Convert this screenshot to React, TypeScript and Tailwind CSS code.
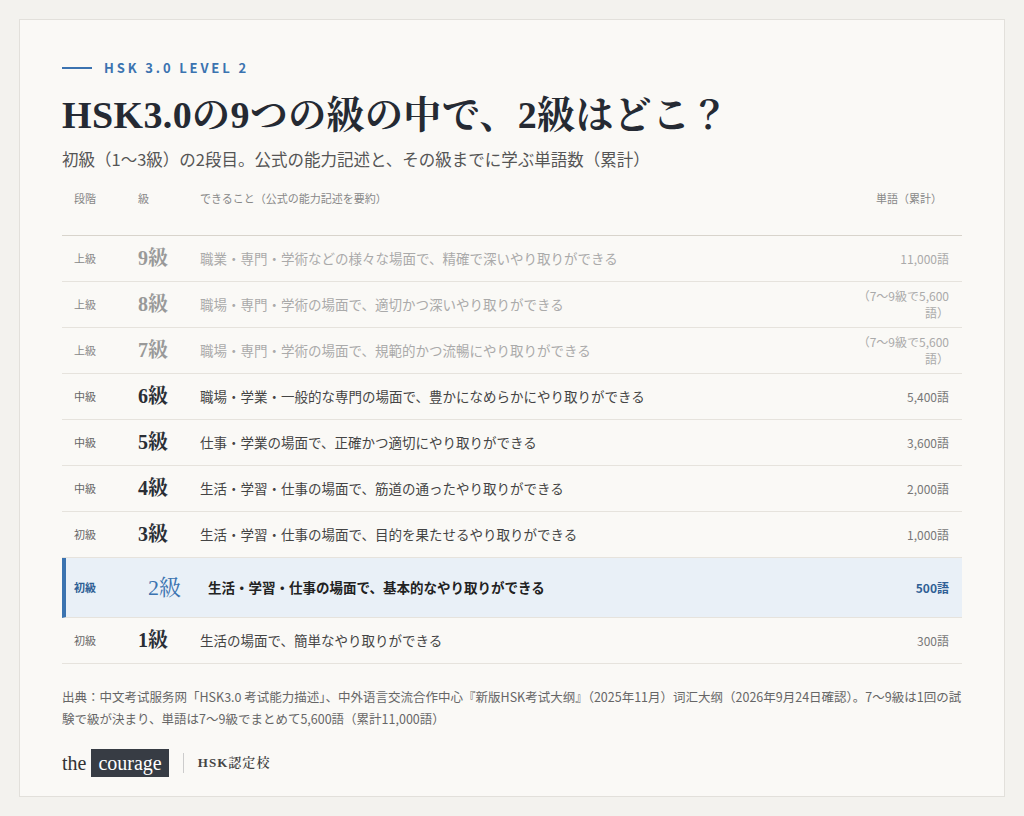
import React from "react";

const rows = [
  { s: "上級", g: "9級", d: "職業・専門・学術などの様々な場面で、精確で深いやり取りができる", w: "11,000語", dim: true },
  { s: "上級", g: "8級", d: "職場・専門・学術の場面で、適切かつ深いやり取りができる", w: "（7〜9級で5,600語）", dim: true },
  { s: "上級", g: "7級", d: "職場・専門・学術の場面で、規範的かつ流暢にやり取りができる", w: "（7〜9級で5,600語）", dim: true },
  { s: "中級", g: "6級", d: "職場・学業・一般的な専門の場面で、豊かになめらかにやり取りができる", w: "5,400語" },
  { s: "中級", g: "5級", d: "仕事・学業の場面で、正確かつ適切にやり取りができる", w: "3,600語" },
  { s: "中級", g: "4級", d: "生活・学習・仕事の場面で、筋道の通ったやり取りができる", w: "2,000語" },
  { s: "初級", g: "3級", d: "生活・学習・仕事の場面で、目的を果たせるやり取りができる", w: "1,000語" },
  { s: "初級", g: "2級", d: "生活・学習・仕事の場面で、基本的なやり取りができる", w: "500語", hl: true },
  { s: "初級", g: "1級", d: "生活の場面で、簡単なやり取りができる", w: "300語" },
];

const sans = { fontFamily: '"Noto Sans CJK JP", "Noto Sans", sans-serif' };
const serif = { fontFamily: '"Liberation Serif", "Noto Serif CJK JP", "Noto Sans CJK JP", serif' };

export default function App() {
  return (
    <div className="w-[1024px] h-[816px] bg-[#f3f2ee] p-[19px]" style={sans}>
      <div className="h-[778px] bg-[#faf9f6] border border-[#e2e0db] px-[42px] pt-[38px]">
        <div className="flex items-center gap-3">
          <div className="w-[30px] h-[2px] bg-[#3b73b0]" />
          <div className="text-[13px] tracking-[0.22em] text-[#3b73b0] font-semibold">HSK 3.0 LEVEL 2</div>
        </div>
        <h1 className="mt-[10px] text-[38px] tracking-[0.01em] font-bold text-[#252a33] leading-[54px]" style={serif}>HSK3.0の9つの級の中で、2級はどこ？</h1>
        <p className="mt-[4px] text-[16.5px] text-[#555] leading-[26px]">初級（1〜3級）の2段目。公式の能力記述と、その級までに学ぶ単語数（累計）</p>
        <div className="flex text-[11px] text-[#888] mt-[12px] h-[52px] border-b border-[#d8d4cc] pt-[6px]">
          <div className="w-[76px] pl-[12px]">段階</div>
          <div className="w-[62px]">級</div>
          <div className="flex-1">できること（公式の能力記述を要約）</div>
          <div className="w-[110px] text-right pr-[20px]">単語（累計）</div>
        </div>
        {rows.map((r, i) => (
          <div
            key={i}
            className={
              "flex items-center border-b border-[#e6e3dd] " +
              (r.hl ? "h-[60px] bg-[#e9f0f7] border-l-4 border-l-[#3b73b0]" : "h-[46px]")
            }
          >
            <div className={"w-[76px] text-[11px] " + (r.hl ? "pl-[8px] text-[#2f5f95] font-bold" : "pl-[12px] " + (r.dim ? "text-[#888]" : "text-[#666]"))}>{r.s}</div>
            <div
              className={
                "w-[62px] " +
                (r.hl ? "text-[22px] text-[#3b73b0] pl-[6px]" : "text-[20px] font-bold " + (r.dim ? "text-[#999]" : "text-[#2a2e35]"))
              }
              style={serif}
            >
              {r.g}
            </div>
            <div className={"flex-1 text-[13.5px] " + (r.hl ? "font-bold text-[#222] pl-[4px]" : r.dim ? "text-[#aaa]" : "text-[#444]")}>{r.d}</div>
            <div className={"w-[120px] text-right pr-[13px] text-[12px] leading-[17px] " + (r.hl ? "font-bold text-[#2f5f95]" : r.dim ? "text-[#aaa]" : "text-[#777]")}>{r.w}</div>
          </div>
        ))}
        <p className="mt-[22px] text-[12.5px] leading-[22px] text-[#666]">
          出典：中文考试服务网「HSK3.0 考试能力描述」、中外语言交流合作中心『新版HSK考试大纲』（2025年11月）词汇大纲（2026年9月24日確認）。7〜9級は1回の試験で級が決まり、単語は7〜9級でまとめて5,600語（累計11,000語）
        </p>
        <div className="mt-[18px] flex items-center">
          <span className="text-[20px] text-[#333] mr-[5px]" style={serif}>the</span>
          <span className="bg-[#373c44] text-white text-[20px] px-[7px] h-[28px] leading-[28px]" style={serif}>courage</span>
          <span className="w-px h-[20px] bg-[#ccc] mx-[14px]" />
          <span className="text-[13px] text-[#444] tracking-[0.08em] font-semibold" style={serif}>HSK認定校</span>
        </div>
      </div>
    </div>
  );
}
